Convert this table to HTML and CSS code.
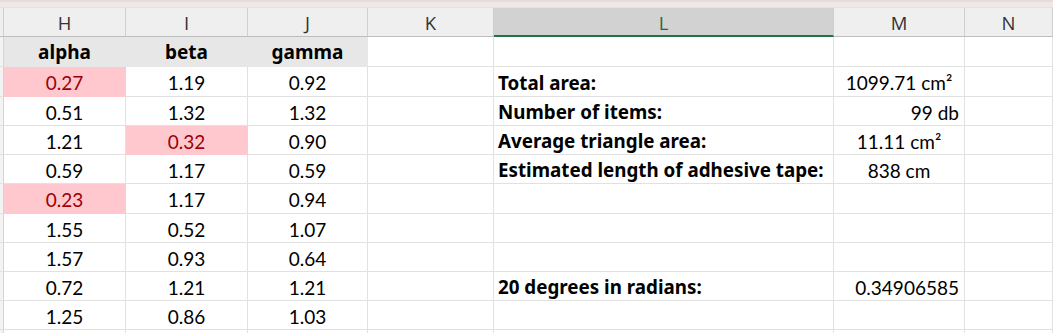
FILE: index.html
```html
<!DOCTYPE html>
<html>
<head>
<meta charset="utf-8">
<link rel="stylesheet" href="styles.css">
</head>
<body>
<div class="topbar"></div>
<div class="sheet">
  <div class="corner"></div>
  <div class="ch">H</div>
  <div class="ch">I</div>
  <div class="ch">J</div>
  <div class="ch">K</div>
  <div class="ch sel">L</div>
  <div class="ch">M</div>
  <div class="ch">N</div>

  <div class="rh"></div>
  <div class="c hd">alpha</div>
  <div class="c hd">beta</div>
  <div class="c hd">gamma</div>
  <div class="c"></div>
  <div class="c"></div>
  <div class="c"></div>
  <div class="c"></div>

  <div class="rh"></div>
  <div class="c n bad">0.27</div>
  <div class="c n">1.19</div>
  <div class="c n">0.92</div>
  <div class="c"></div>
  <div class="c lbl">Total area:</div>
  <div class="c n">1099.71 cm²</div>
  <div class="c"></div>

  <div class="rh"></div>
  <div class="c n">0.51</div>
  <div class="c n">1.32</div>
  <div class="c n">1.32</div>
  <div class="c"></div>
  <div class="c lbl">Number of items:</div>
  <div class="c rt">99 db</div>
  <div class="c"></div>

  <div class="rh"></div>
  <div class="c n">1.21</div>
  <div class="c n bad">0.32</div>
  <div class="c n">0.90</div>
  <div class="c"></div>
  <div class="c lbl">Average triangle area:</div>
  <div class="c n">11.11 cm²</div>
  <div class="c"></div>

  <div class="rh"></div>
  <div class="c n">0.59</div>
  <div class="c n">1.17</div>
  <div class="c n">0.59</div>
  <div class="c"></div>
  <div class="c lbl">Estimated length of adhesive tape:</div>
  <div class="c n">838 cm</div>
  <div class="c"></div>

  <div class="rh"></div>
  <div class="c n bad">0.23</div>
  <div class="c n">1.17</div>
  <div class="c n">0.94</div>
  <div class="c"></div>
  <div class="c"></div>
  <div class="c"></div>
  <div class="c"></div>

  <div class="rh"></div>
  <div class="c n">1.55</div>
  <div class="c n">0.52</div>
  <div class="c n">1.07</div>
  <div class="c"></div>
  <div class="c"></div>
  <div class="c"></div>
  <div class="c"></div>

  <div class="rh"></div>
  <div class="c n">1.57</div>
  <div class="c n">0.93</div>
  <div class="c n">0.64</div>
  <div class="c"></div>
  <div class="c"></div>
  <div class="c"></div>
  <div class="c"></div>

  <div class="rh"></div>
  <div class="c n">0.72</div>
  <div class="c n">1.21</div>
  <div class="c n">1.21</div>
  <div class="c"></div>
  <div class="c lbl">20 degrees in radians:</div>
  <div class="c rt">0.34906585</div>
  <div class="c"></div>

  <div class="rh"></div>
  <div class="c n">1.25</div>
  <div class="c n">0.86</div>
  <div class="c n">1.03</div>
  <div class="c"></div>
  <div class="c"></div>
  <div class="c"></div>
  <div class="c"></div>

  <div class="rh"></div>
  <div class="c"></div>
  <div class="c"></div>
  <div class="c"></div>
  <div class="c"></div>
  <div class="c"></div>
  <div class="c"></div>
  <div class="c"></div>
</div>
</body>
</html>
```

FILE: styles.css
```css
html, body {
  margin: 0;
  padding: 0;
  background: #ffffff;
  overflow: hidden;
}

.topbar {
  height: 8px;
  box-sizing: border-box;
  background: #f0e8e6;
  border-top: 2px solid #e8dcd9;
  border-bottom: 1px solid #e4e0df;
}

.sheet {
  display: grid;
  grid-template-columns: 4px 122px 122px 120px 126px 340px 131px 1fr;
  grid-template-rows: 29px 30px 30px 29px 29px 29px 30px 29px 29px 29px 29px 29px;
  font-family: Lato, "Open Sans", sans-serif;
  font-size: 19px;
  color: #000;
}

.corner,
.ch {
  background: #efefef;
  border-right: 1px solid #cfcfcf;
  border-bottom: 1px solid #bdbdbd;
  box-sizing: border-box;
}

.ch {
  display: flex;
  align-items: center;
  justify-content: center;
  font-family: "Open Sans", "Noto Sans", sans-serif;
  font-size: 18.5px;
  color: #333;
  padding-top: 1px;
}

.ch.sel {
  background: #d2d2d2;
  color: #1e6b3f;
  border-bottom: 2px solid #217346;
}

.rh {
  background: #f3f3f3;
  border-right: 1px solid #d4d4d4;
  border-bottom: 1px solid #e2e2e2;
  box-sizing: border-box;
}

.c {
  box-sizing: border-box;
  border-right: 1px solid #e1e1e1;
  border-bottom: 1px solid #e1e1e1;
  display: flex;
  align-items: center;
  white-space: nowrap;
  padding-top: 2px;
}

.hd {
  background: #e7e7e7;
  border-color: #e7e7e7;
  font-family: "Noto Sans", "Open Sans", sans-serif;
  font-weight: 700;
  font-size: 19px;
  justify-content: center;
  padding-top: 0;
}

.n {
  justify-content: center;
}

.rt {
  justify-content: flex-end;
  padding-right: 5px;
}

.lbl {
  font-family: "Noto Sans", "Open Sans", sans-serif;
  font-weight: 700;
  font-size: 18.8px;
  padding-left: 4px;
  padding-top: 2px;
}

.bad {
  background: #ffc7ce;
  border-color: #ffc7ce;
  color: #9c0006;
}
```
